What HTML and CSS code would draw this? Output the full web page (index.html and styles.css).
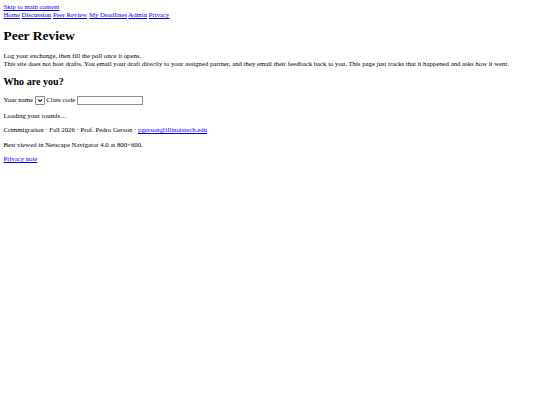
FILE: index.html
```html
<!DOCTYPE html>
<html lang="en">
<head>
    <meta charset="UTF-8">
    <title>Peer Review</title>
    <link rel="stylesheet" href="styles.css">
</head>
<body>
    <a class="skip" href="#main">Skip to main content</a>
    <nav class="nav">
        <a href="#">Home</a>
        <a href="#">Discussion</a>
        <a href="#">Peer Review</a>
        <a href="#">My Deadlines</a>
        <a href="#">Admin</a>
        <a href="#">Privacy</a>
    </nav>

    <main id="main">
        <h1 class="title">Peer Review</h1>
        <p class="intro">Log your exchange, then fill the poll once it opens.<br>
        This site does not host drafts. You email your draft directly to your assigned partner, and they email their feedback back to you. This page just tracks that it happened and asks how it went.</p>

        <h2 class="sub">Who are you?</h2>
        <p class="who">
            <label>Your name <select class="pick"><option></option></select></label>
            <label>Class code <input class="code" type="text"></label>
        </p>

        <p class="status">Loading your rounds…</p>
    </main>

    <footer class="foot">
        <p>Crimmigration · Fall 2026 · Prof. Pedro Gerson · <a href="#">pgerson@illinoistech.edu</a></p>
        <p>Best viewed in Netscape Navigator 4.0 at 800×600.</p>
        <p><a href="#">Privacy note</a></p>
    </footer>
</body>
</html>
```

FILE: styles.css
```css
body {
    margin: 3.4px;
    font-family: "Liberation Serif", "Times New Roman", serif;
    font-size: 6.75px;
    line-height: 7.7px;
    color: #000;
    background: #fff;
}
a { color: #0000ee; }
.skip { display: block; }

.title {
    font-size: 13.5px;
    line-height: 15.5px;
    margin: 0.67em 0;
}
.sub {
    font-size: 10.1px;
    line-height: 11.6px;
    margin: 0.83em 0;
}
p { margin: 1em 0; }

.pick, .code {
    font-family: "Liberation Sans", Arial, sans-serif;
    font-size: 5.6px;
    box-sizing: border-box;
    vertical-align: middle;
}
/* native arrow is unreadable at this size, so draw a chevron */
.pick {
    appearance: none;
    width: 10px;
    height: 9px;
    padding: 0;
    border: 1px solid #8f8f8f;
    border-radius: 1px;
    background: #fff url("data:image/svg+xml,%3Csvg xmlns='http://www.w3.org/2000/svg' viewBox='0 0 8 7'%3E%3Cpath d='M2 2.5 4 4.5 6 2.5' fill='none' stroke='%23333' stroke-width='1.1'/%3E%3C/svg%3E") center / 8px 7px no-repeat;
}
.code {
    width: 66px;
    height: 9px;
    padding: 0 1px;
    border: 1px solid #8f8f8f;
}
```
